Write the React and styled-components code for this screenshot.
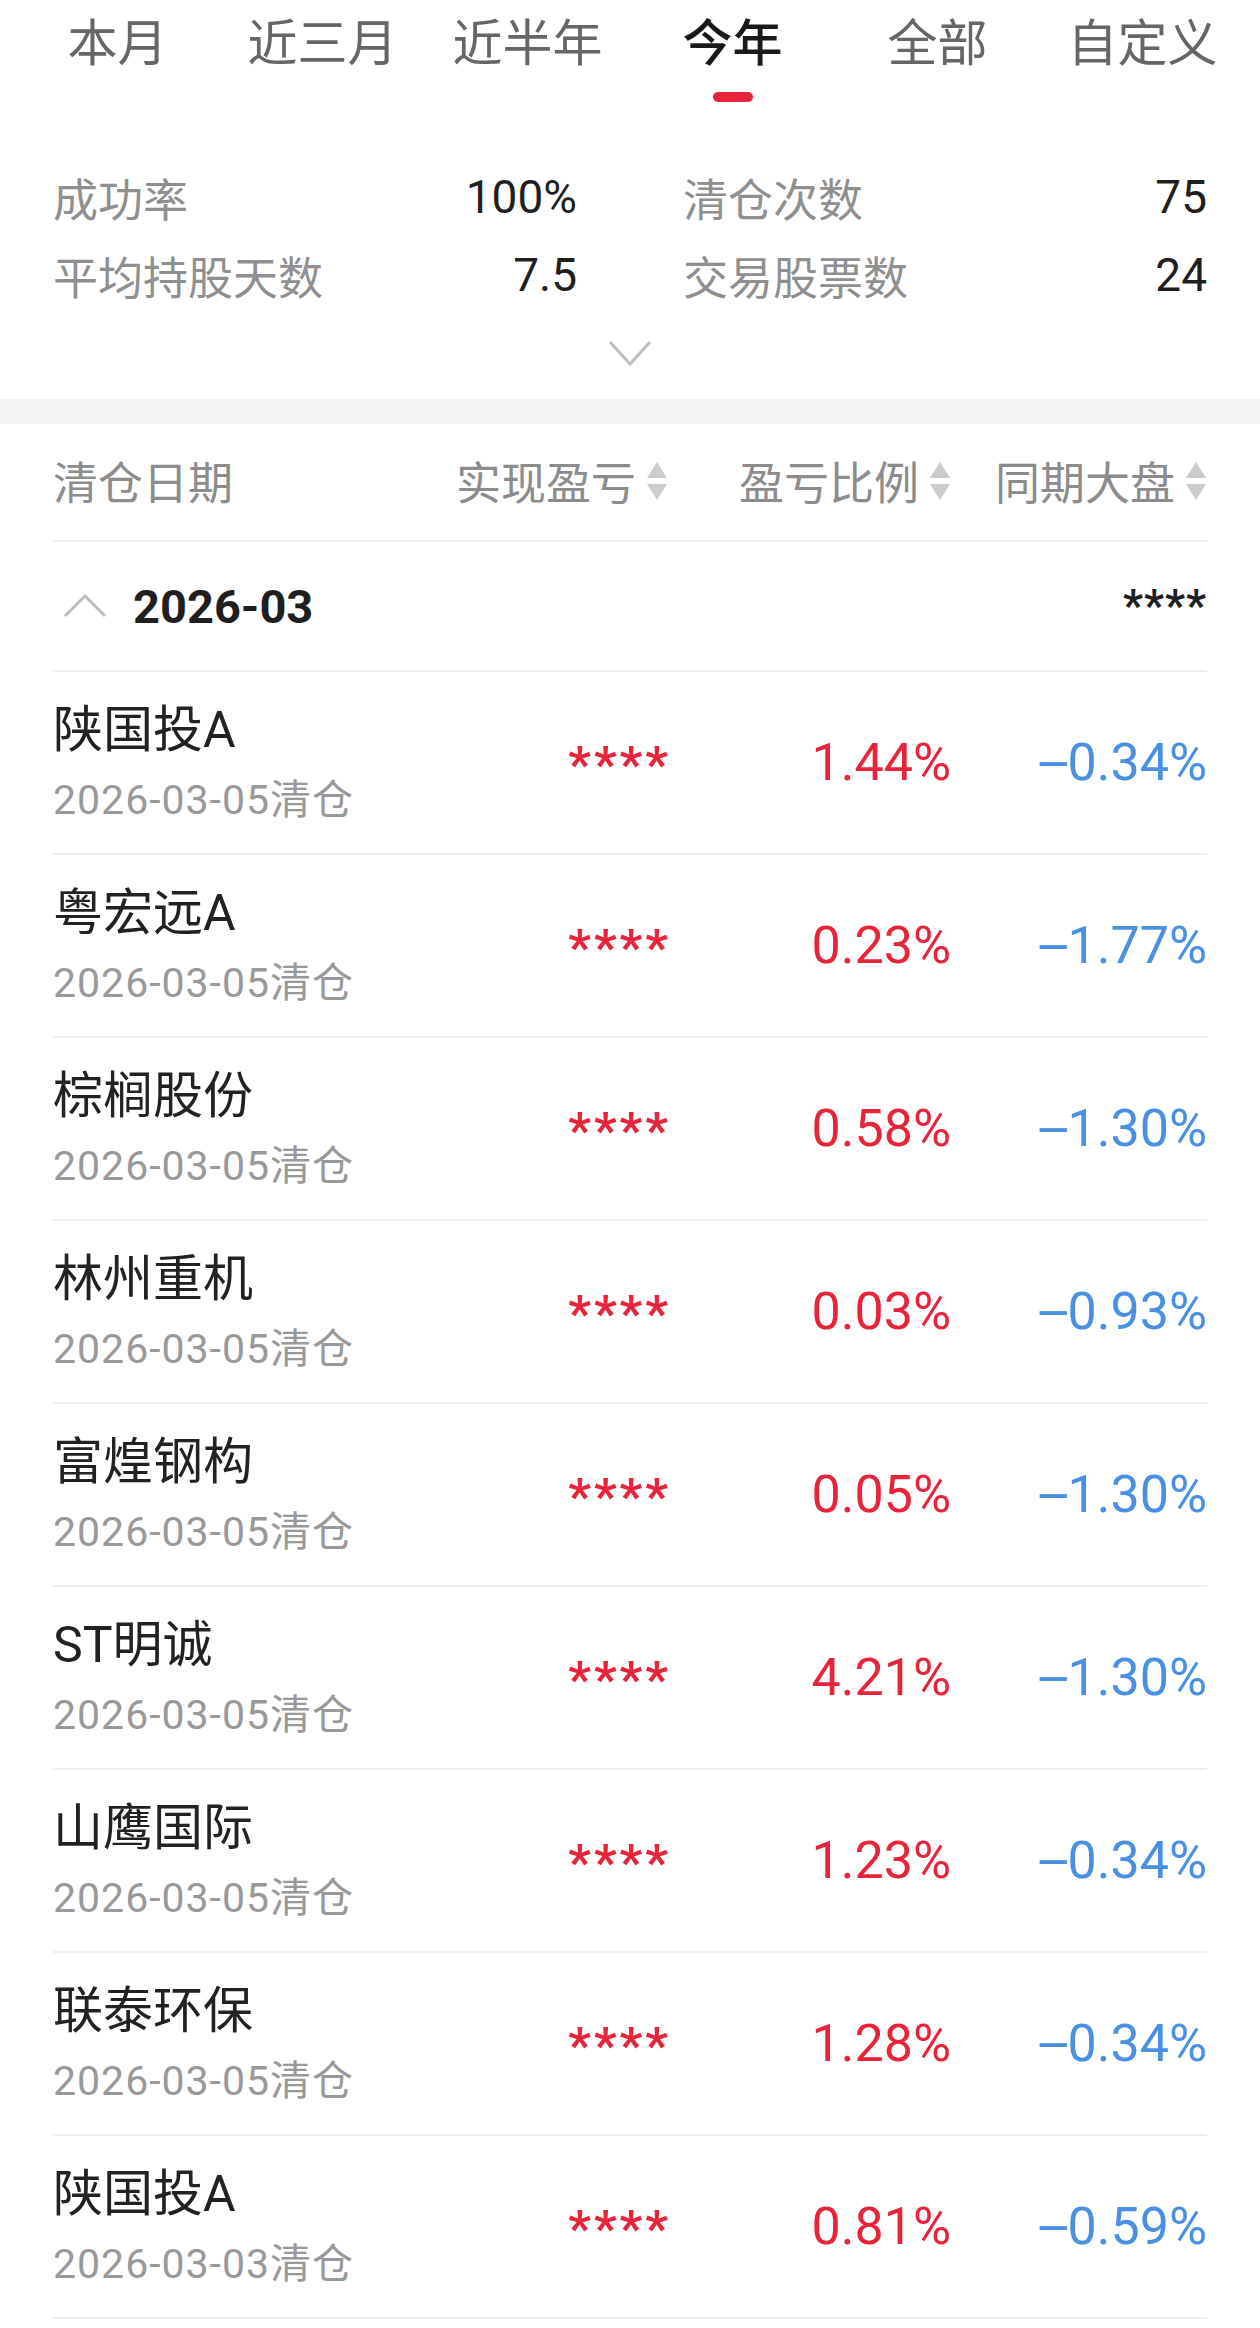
import React from "react";
import styled, { createGlobalStyle } from "styled-components";

const GlobalStyle = createGlobalStyle`
  * { box-sizing: border-box; }
  body {
    margin: 0;
    background: #fff;
    font-family: Roboto, "Noto Sans CJK SC", sans-serif;
  }
`;

const Page = styled.div`
  width: 1260px;
  background: #fff;
`;

const TabBar = styled.div`
  display: grid;
  grid-template-columns: repeat(6, 1fr);
  padding: 0 15px;
  height: 102px;
`;

const Tab = styled.div`
  display: flex;
  flex-direction: column;
  align-items: center;
  padding-top: 14px;
  font-size: 50px;
  line-height: 60px;
  color: ${(p) => (p.$active ? "#1a1a1a" : "#666")};
  font-weight: ${(p) => (p.$active ? 500 : 400)};
`;

const Indicator = styled.div`
  margin-top: 18px;
  width: 40px;
  height: 10px;
  border-radius: 5px;
  background: #e8243a;
`;

const Stats = styled.div`
  padding: 65px 53px 33px;
  display: flex;
  flex-direction: column;
  align-items: center;
`;

const StatsGrid = styled.div`
  width: 100%;
  display: grid;
  grid-template-columns: 1fr 1fr;
  column-gap: 106px;
  row-gap: 18px;
`;

const StatItem = styled.div`
  display: flex;
  justify-content: space-between;
  align-items: center;
  height: 60px;
`;

const StatLabel = styled.span`
  font-size: 45px;
  color: #8f8f8f;
`;

const StatValue = styled.span`
  font-size: 46px;
  color: #1f1f1f;
`;

const ExpandIcon = styled.svg`
  margin-top: 35px;
  display: block;
`;

const Band = styled.div`
  height: 25px;
  background: #f4f4f4;
`;

const Table = styled.div`
  padding: 0 53px;
`;

const Row = styled.div`
  display: grid;
  grid-template-columns: 1fr 260px 283px 256px;
  align-items: center;
  border-bottom: 2px solid #efefef;
  height: ${(p) => p.$h}px;
`;

const HeadCell = styled.div`
  display: flex;
  align-items: center;
  justify-content: ${(p) => (p.$left ? "flex-start" : "flex-end")};
  gap: 10px;
  font-size: 45px;
  color: #8c8c8c;
  margin-top: -3px;
`;

const GroupRow = styled.div`
  display: flex;
  align-items: center;
  justify-content: space-between;
  height: 130px;
  border-bottom: 2px solid #efefef;
`;

const GroupTitle = styled.div`
  display: flex;
  align-items: center;
  gap: 26px;
  padding-left: 10px;
  font-size: 47px;
  font-weight: 700;
  color: #1f1f1f;
`;

const GroupMask = styled.span`
  font-size: 44px;
  font-weight: 700;
  color: #1f1f1f;
  letter-spacing: 1px;
`;

const NameCell = styled.div`
  display: flex;
  flex-direction: column;
  gap: 18px;
`;

const Name = styled.div`
  font-size: 50px;
  line-height: 56px;
  color: #222;
`;

const DateText = styled.div`
  font-size: 41px;
  line-height: 48px;
  color: #999;
  letter-spacing: 1px;
`;

const Mask = styled.div`
  text-align: right;
  font-size: 50px;
  font-weight: 700;
  color: #e8243a;
  letter-spacing: 3px;
  margin: 5px -3px 0 0;
`;

const Pct = styled.div`
  text-align: right;
  font-size: 52px;
  color: ${(p) => (p.$up ? "#e8243a" : "#4a90e2")};
`;

const Sign = styled.span`
  display: inline-block;
  transform: scaleX(2.2);
  margin: 0 7px;
`;

const SortIcon = () => (
  <svg width="22" height="40" viewBox="0 0 22 40">
    <path d="M11 1 L21 17 L1 17 Z" fill="#cccccc" />
    <path d="M1 23 L21 23 L11 39 Z" fill="#cccccc" />
  </svg>
);

const SignedPct = ({ value }) =>
  value.startsWith("-") ? (
    <Pct>
      <Sign>-</Sign>
      {value.slice(1)}
    </Pct>
  ) : (
    <Pct $up>{value}</Pct>
  );

const tabs = ["本月", "近三月", "近半年", "今年", "全部", "自定义"];

const rows = [
  ["陕国投A", "2026-03-05清仓", "1.44%", "-0.34%"],
  ["粤宏远A", "2026-03-05清仓", "0.23%", "-1.77%"],
  ["棕榈股份", "2026-03-05清仓", "0.58%", "-1.30%"],
  ["林州重机", "2026-03-05清仓", "0.03%", "-0.93%"],
  ["富煌钢构", "2026-03-05清仓", "0.05%", "-1.30%"],
  ["ST明诚", "2026-03-05清仓", "4.21%", "-1.30%"],
  ["山鹰国际", "2026-03-05清仓", "1.23%", "-0.34%"],
  ["联泰环保", "2026-03-05清仓", "1.28%", "-0.34%"],
  ["陕国投A", "2026-03-03清仓", "0.81%", "-0.59%"],
];

export default function App() {
  return (
    <Page>
      <GlobalStyle />
      <TabBar>
        {tabs.map((t) => (
          <Tab key={t} $active={t === "今年"}>
            {t}
            {t === "今年" && <Indicator />}
          </Tab>
        ))}
      </TabBar>

      <Stats>
        <StatsGrid>
          <StatItem>
            <StatLabel>成功率</StatLabel>
            <StatValue>100%</StatValue>
          </StatItem>
          <StatItem>
            <StatLabel>清仓次数</StatLabel>
            <StatValue>75</StatValue>
          </StatItem>
          <StatItem>
            <StatLabel>平均持股天数</StatLabel>
            <StatValue>7.5</StatValue>
          </StatItem>
          <StatItem>
            <StatLabel>交易股票数</StatLabel>
            <StatValue>24</StatValue>
          </StatItem>
        </StatsGrid>
        <ExpandIcon width="44" height="26" viewBox="0 0 44 26">
          <polyline points="2,2 22,24 42,2" fill="none" stroke="#bdbdbd" strokeWidth="3" />
        </ExpandIcon>
      </Stats>

      <Band />

      <Table>
        <Row $h={118}>
          <HeadCell $left>清仓日期</HeadCell>
          <HeadCell>
            实现盈亏
            <SortIcon />
          </HeadCell>
          <HeadCell>
            盈亏比例
            <SortIcon />
          </HeadCell>
          <HeadCell>
            同期大盘
            <SortIcon />
          </HeadCell>
        </Row>

        <GroupRow>
          <GroupTitle>
            <svg width="44" height="24" viewBox="0 0 44 24">
              <polyline points="2,22 22,2 42,22" fill="none" stroke="#bdbdbd" strokeWidth="3" />
            </svg>
            2026-03
          </GroupTitle>
          <GroupMask>****</GroupMask>
        </GroupRow>

        {rows.map((r, i) => (
          <Row key={i} $h={183}>
            <NameCell>
              <Name>{r[0]}</Name>
              <DateText>{r[1]}</DateText>
            </NameCell>
            <Mask>****</Mask>
            <SignedPct value={r[2]} />
            <SignedPct value={r[3]} />
          </Row>
        ))}
      </Table>
    </Page>
  );
}
